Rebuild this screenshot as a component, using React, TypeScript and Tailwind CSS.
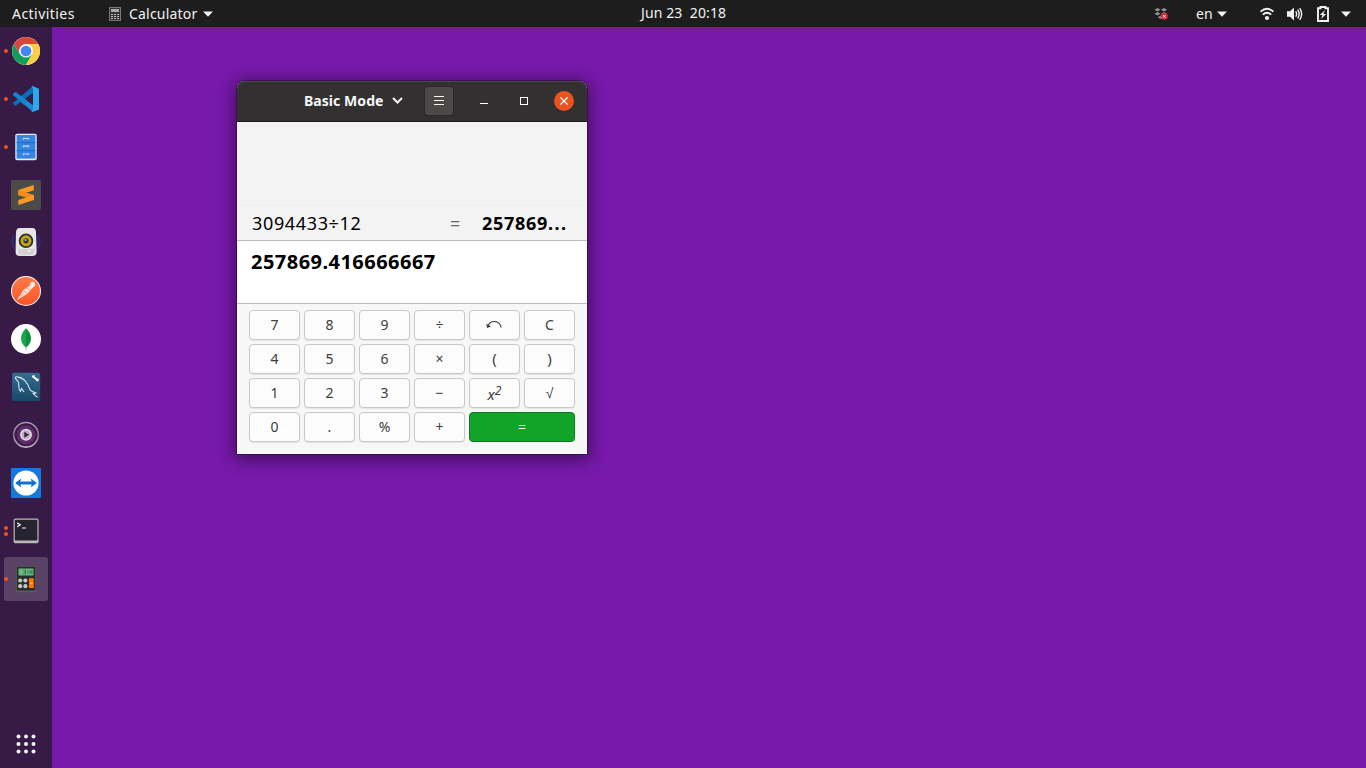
import React from "react";

type IconProps = { children: React.ReactNode };

const AppIcon = ({ children }: IconProps) => (
  <svg viewBox="0 0 32 32" className="h-8 w-8 shrink-0">
    {children}
  </svg>
);

const Chrome = () => (
  <AppIcon>
    <circle cx="16" cy="16" r="14" fill="#fff" />
    <path d="M3.9 9A14 14 0 0 0 16 30L22 19.5L16 16L10 19.5Z" fill="#0f9d58" />
    <path d="M28.1 9A14 14 0 0 1 16 30L22 19.5A7 7 0 0 0 16 9Z" fill="#ffcd40" />
    <path d="M3.9 9L10 19.5A7 7 0 0 1 16 9H28.1A14 14 0 0 0 3.9 9Z" fill="#db4437" />
    <circle cx="16" cy="16" r="6.6" fill="#f1f1f1" />
    <circle cx="16" cy="16" r="5.3" fill="#4285f4" />
  </AppIcon>
);

const Code = () => (
  <AppIcon>
    <path d="M3 11L5.5 9L23 22.3V29L3.4 12.3Z" fill="#1f8ad2" />
    <path d="M3 20.6L5.5 23L23 9.7V3L3.4 19.5Z" fill="#0a6fb8" />
    <path d="M3 11L5.5 9L17 17.7L14 22Z" fill="#1684cf" />
    <path d="M22.5 3L29 5.7V26.4L22.5 29L21.3 28.3L23 27V5L21.3 3.8Z" fill="#2fa8ee" />
  </AppIcon>
);

const Files = () => (
  <AppIcon>
    <rect x="5.3" y="2.8" width="21.4" height="26.5" rx="1.8" fill="#e8eef6" />
    <rect x="6.6" y="4" width="18.8" height="23.6" fill="#3584e4" />
    <path d="M6.6 11.7H25.4M6.6 19.7H25.4" stroke="#1d63b8" strokeWidth=".8" />
    <path d="M13.4 8.5V7.5H18.6V8.5M13.4 16.2V15.2H18.6V16.2M13.4 24V23H18.6V24" fill="none" stroke="#d9e2ec" strokeWidth="1.2" />
  </AppIcon>
);

const Sublime = () => (
  <AppIcon>
    <rect x="1" y="1" width="30" height="30" rx="1.5" fill="#4b4b4b" />
    <path d="M8.4 11L23.8 6V11.2L8.4 16.2Z" fill="#ff9820" />
    <path d="M8.4 11L23.8 16V21L8.4 16.2Z" fill="#f08c1d" />
    <path d="M8.4 21L23.8 16V21L8.4 26Z" fill="#ff9820" />
  </AppIcon>
);

const Speaker = () => (
  <AppIcon>
    <ellipse cx="16" cy="15" rx="14.7" ry="11" fill="#30205a" />
    <path d="M4 8Q0 15 4 22M28 8Q32 15 28 22" fill="none" stroke="#3c3472" />
    <path d="M9.5 1H22.5Q25.6 1 26 5L26.6 25Q26.6 29 22.5 29H9.5Q5.6 29 5.6 25L6 5Q6.4 1 9.5 1Z" fill="#e6e6e6" />
    <path d="M8 22H24V25.5Q24 28 21.5 28H10.5Q8 28 8 25.5Z" fill="#d2d2d2" />
    <circle cx="16" cy="13.8" r="7.3" fill="#2e2e2b" />
    <circle cx="16" cy="13.8" r="5.5" fill="#c3a51d" />
    <circle cx="16" cy="13.8" r="2.6" fill="#39372d" />
    <circle cx="15.5" cy="13" r="1" fill="#bbb" />
    <circle cx="19" cy="24" r="1.6" fill="#f7f7f7" stroke="#bbb" strokeWidth=".5" />
  </AppIcon>
);

const Postman = () => (
  <AppIcon>
    <defs>
      <linearGradient id="flame" x2="0" y2="1"><stop stopColor="#ff7a45" /><stop offset="1" stopColor="#fa5528" /></linearGradient>
    </defs>
    <circle cx="16" cy="16" r="15" fill="#fff" />
    <circle cx="16" cy="16" r="14" fill="url(#flame)" />
    <path d="M20.6 10L13 15.2L10.6 19.4L6.6 25.4L14.2 20.8L17.6 18.6L23.2 12.2Z" fill="#ffe4da" />
    <circle cx="22.6" cy="9.4" r="2.6" fill="#ffe9e0" />
    <path d="M13.5 16L17 18M17 13.2L20 15.2M10.2 21.6L13.4 19" stroke="#ff7144" strokeWidth=".7" />
  </AppIcon>
);

const Mongo = () => (
  <AppIcon>
    <circle cx="16" cy="16" r="15" fill="#fff" />
    <path d="M16 5.2C12.6 8.5 11 12 11 15.5C11 19.7 13.4 22.6 16 24.6Z" fill="#17a94e" />
    <path d="M16 5.2C19.4 8.5 21 12 21 15.5C21 19.7 18.6 22.6 16 24.6Z" fill="#118d42" />
    <path d="M16 23.5V27" stroke="#9fb8a6" />
  </AppIcon>
);

const MySql = () => (
  <AppIcon>
    <defs>
      <linearGradient id="sea" x2="0" y2="1"><stop stopColor="#336d91" /><stop offset="1" stopColor="#194869" /></linearGradient>
    </defs>
    <rect x="2" y="1.8" width="28.2" height="28.2" rx="2" fill="url(#sea)" />
    <path d="M5.3 7.2C5.2 5.8 6.6 5.3 8 6.1C13 6.3 18 12 19.7 18.2C20.5 20 22.5 20.8 25.8 22L23.2 22.6L27.6 26.4M5.3 7.2L8.2 10.8C9.6 13 7.6 17 10.4 20.5L11.6 17.4L14 21" fill="none" stroke="#dce7ef" strokeWidth="1.1" />
    <path d="M23.6 6L27 8.8" stroke="#fff" strokeWidth="2" />
    <path d="M21.7 4.7L24.5 4L24.7 7L22.3 6.6ZM26 8L28.4 7.5L28.8 9L27.8 10.6L26.3 10Z" fill="#fff" />
  </AppIcon>
);

const Player = () => (
  <AppIcon>
    <defs>
      <linearGradient id="ring" x2="0" y2="1"><stop stopColor="#a79fac" /><stop offset=".5" stopColor="#80708a" /><stop offset="1" stopColor="#c4bdc6" /></linearGradient>
    </defs>
    <circle cx="16" cy="15.8" r="12.3" fill="#5a2864" stroke="url(#ring)" strokeWidth="1.6" />
    <circle cx="16" cy="15.8" r="10.4" fill="#5f2c69" stroke="#3a1b45" strokeWidth="1.6" />
    <circle cx="16" cy="15.8" r="6" fill="#ddd8de" />
    <circle cx="16" cy="15.8" r="4.2" fill="#b9aebc" />
    <path d="M14.2 12.8L19.2 15.8L14.2 18.8Z" fill="#4c204f" />
  </AppIcon>
);

const TeamViewer = () => (
  <AppIcon>
    <rect x="1" y="1" width="30" height="30" rx="1" fill="#1479dc" />
    <circle cx="16" cy="16" r="12.6" fill="#fff" />
    <path d="M5.1 16L11.2 11.6L10.4 14.6H21.6L20.8 11.6L26.9 16L20.8 20.4L21.6 17.4H10.4L11.2 20.4Z" fill="#0d72ce" />
  </AppIcon>
);

const Terminal = () => (
  <AppIcon>
    <rect x="3.6" y="3.6" width="25" height="24.6" rx="1.6" fill="#b9b8b5" />
    <rect x="4.8" y="4.8" width="22.6" height="20.6" rx=".6" fill="#252430" />
    <path d="M7.2 8L10.2 9.8L7.2 11.7M12 13H15.8" fill="none" stroke="#fff" strokeWidth="1.2" />
  </AppIcon>
);

const CalculatorApp = () => (
  <AppIcon>
    <rect x="6.1" y="3.2" width="19.8" height="26" rx="1.5" fill="#5f5d59" />
    <rect x="6.9" y="3.7" width="18.2" height="23.7" rx=".8" fill="#282c2b" />
    <rect x="8.5" y="5.4" width="15" height="7" rx=".7" fill="#69ba80" />
    <path d="M13 7H15.5V10.8H13M13.6 8.9H15.5M18 10.8V7.5M20 10.8V7.2L22 10.8V7" fill="none" stroke="#397650" strokeWidth=".9" />
    <circle cx="10.2" cy="17.5" r="2.1" fill="#c9c8c4" />
    <circle cx="15.4" cy="17.5" r="2.1" fill="#c9c8c4" />
    <circle cx="10.2" cy="23.2" r="2.1" fill="#c9c8c4" />
    <circle cx="15.4" cy="23.2" r="2.1" fill="#c9c8c4" />
    <rect x="19" y="15.3" width="4.8" height="9.8" rx=".5" fill="#ff7800" />
    <path d="M20.2 20.2H22.6" stroke="#ffd0a0" strokeWidth=".9" />
  </AppIcon>
);

const dockItems = [
  { Icon: Chrome, dots: 1 },
  { Icon: Code, dots: 1 },
  { Icon: Files, dots: 1 },
  { Icon: Sublime, dots: 0 },
  { Icon: Speaker, dots: 0 },
  { Icon: Postman, dots: 0 },
  { Icon: Mongo, dots: 0 },
  { Icon: MySql, dots: 0 },
  { Icon: Player, dots: 0 },
  { Icon: TeamViewer, dots: 0 },
  { Icon: Terminal, dots: 2 },
  { Icon: CalculatorApp, dots: 1, active: true },
];

const Caret = () => (
  <svg className="h-[6px] w-[10px] shrink-0" viewBox="0 0 10 6"><path d="M0 .5H10L5 5.7Z" fill="#f2f2f2" /></svg>
);

const TopBar = () => (
  <header className="flex h-[27px] shrink-0 items-center bg-[#1d1d1d] text-sm leading-[27px] text-[#f2f2f2]">
    <div className="flex w-[641px] items-center pl-3">
      <span className="w-[97px] tracking-[0.45px]">Activities</span>
      <svg className="mr-2 h-[14px] w-3" viewBox="0 0 12 14">
        <rect x=".5" y=".5" width="11" height="13" fill="#343434" stroke="#777" />
        <rect x="2" y="2" width="8" height="3" fill="#aaa" />
        <path d="M2 7.5H10M2 9.5H10M2 11.5H10" stroke="#bbb" strokeWidth="1.2" strokeDasharray="2 1" />
      </svg>
      <span className="w-[74px] tracking-[0.2px]">Calculator</span>
      <Caret />
    </div>
    <div className="w-[512px] pb-[2px] leading-[25px] whitespace-pre tracking-[0.1px]">Jun 23  20:18</div>
    <svg className="h-[14px] w-4 shrink-0" viewBox="0 0 16 14">
      <path d="M1.5 2.8L4.5 1L7.5 2.8L4.5 4.6ZM8 2.8L11 1L14 2.8L11 4.6ZM1.5 6.8L4.5 5L7.5 6.8L4.5 8.6ZM8 6.8L11 5L14 6.8L11 8.6ZM4.7 10.3L7.7 8.5L10.7 10.3L7.7 12.1Z" fill="#949494" />
      <circle cx="11.3" cy="9.3" r="3.5" fill="#e52434" />
      <path d="M10 8L12.6 10.6M12.6 8L10 10.6" stroke="#fff" />
    </svg>
    <span className="ml-[27px] w-[21px]">en</span>
    <Caret />
    <svg className="ml-[33px] h-[14px] w-[14px]" viewBox="0 0 14 14">
      <path d="M.5 4.7Q7-1.1 13.5 4.7M2.8 7.6Q7 4 11.2 7.6" fill="none" stroke="#f2f2f2" strokeWidth="1.8" />
      <circle cx="7" cy="11" r="2.1" fill="#f2f2f2" />
    </svg>
    <svg className="ml-[13px] h-4 w-4" viewBox="0 0 16 16">
      <path d="M0 5.3H3L7 1.6V14.4L3 10.7H0Z" fill="#f2f2f2" />
      <path d="M8.7 5.3Q10.6 8 8.7 10.7M10.7 3.7Q13.6 8 10.7 12.3M12.7 2.2Q16.6 8 12.7 13.8" fill="none" stroke="#f2f2f2" strokeWidth="1.4" />
    </svg>
    <svg className="ml-[14px] h-4 w-3" viewBox="0 0 12 16">
      <path d="M1 2.3H3.5V1H8.5V2.3H11V15H1Z" fill="none" stroke="#f2f2f2" strokeWidth="1.9" />
      <path d="M8 4L2.8 9H5.5L4 13L9.2 8H6.4Z" fill="#f2f2f2" />
    </svg>
    <div className="ml-3 flex"><Caret /></div>
  </header>
);

const Dock = () => (
  <nav className="flex w-[52px] shrink-0 flex-col bg-[#371a45]">
    {dockItems.map(({ Icon, dots, active }, i) => (
      <div key={i} className="flex h-12 items-center">
        <div className={active ? "ml-1 flex h-11 w-11 items-center rounded-[3px] bg-[#5a4267]" : "ml-1 flex h-11 w-11 items-center"}>
          <div className="flex w-[6px] shrink-0 flex-col gap-[2px]">
            {Array.from({ length: dots }, (_, n) => <span key={n} className="h-1 w-1 rounded-full bg-[#e95420]" />)}
          </div>
          <Icon />
        </div>
      </div>
    ))}
    <svg className="mt-auto mb-[14px] ml-4 h-5 w-5" viewBox="0 0 20 20" fill="#f2f2f2">
      {[2.5, 10, 17.5].map((y) => [2.5, 10, 17.5].map((x) => <circle key={`${x}-${y}`} cx={x} cy={y} r="2" />))}
    </svg>
  </nav>
);

const UndoIcon = () => (
  <svg className="mr-[2px] h-[10px] w-4" viewBox="0 0 16 10">
    <path d="M2 6.2C4.2-.2 13.4-.2 15.2 7.5" fill="none" stroke="#3d3d3d" strokeWidth="1.1" />
    <path d="M.4 3.8L1 8L5 6.6Z" fill="#3d3d3d" />
  </svg>
);

const keys: React.ReactNode[] = [
  "7", "8", "9", "÷", <UndoIcon />, "C",
  "4", "5", "6", "×", <span className="text-[15px]">(</span>, <span className="text-[15px]">)</span>,
  "1", "2", "3", "−",
  <span className="flex items-baseline pt-[3px] italic"><span className="text-[15px]">x</span><span className="-translate-y-[5px] text-[12px]">2</span></span>,
  "√", "0", ".", "%", "+",
];

const Calculator = () => (
  <main className="mt-[54px] ml-[185px] flex h-[373px] w-[350px] flex-col overflow-hidden rounded-t-[8px] bg-[#f7f7f7] shadow-[0_0_0_1px_rgba(0,0,0,0.3),0_3px_16px_3px_rgba(0,0,0,0.45)]">
    <div className="flex h-[41px] shrink-0 items-center border-t border-b border-t-[#4a4848] border-b-[#1c1b1b] bg-[#323030] pb-[2px] text-white">
      <span className="ml-[67px] w-[88px] text-sm font-bold tracking-[0.05px] whitespace-nowrap text-[#f7f7f7]">Basic Mode</span>
      <svg className="h-[7px] w-[11px]" viewBox="0 0 11 7"><path d="M1 1L5.5 5.5L10 1" fill="none" stroke="#f7f7f7" strokeWidth="2" /></svg>
      <button className="ml-[22px] flex h-7 w-7 items-center justify-center rounded-[3px] bg-[#4a4947] shadow-[0_0_0_1px_#2a2929]">
        <svg className="h-[10px] w-[10px]" viewBox="0 0 10 10"><path d="M0 .5H10M0 4.5H10M0 8.5H10" stroke="#f7f7f7" shapeRendering="crispEdges" /></svg>
      </button>
      <span className="mt-[5px] ml-[27px] h-px w-2 bg-white" />
      <span className="ml-8 h-2 w-2 border border-white" />
      <button className="ml-[26px] flex h-5 w-5 items-center justify-center rounded-full bg-[#e95420]">
        <svg className="h-2 w-2" viewBox="0 0 8 8"><path d="M.4.4L7.6 7.6M7.6.4L.4 7.6" stroke="#fff" strokeWidth="1.3" /></svg>
      </button>
    </div>
    <div className="flex h-[119px] shrink-0 flex-col justify-end border-b border-[#bdbdbd] bg-[#f3f3f3] text-[18px] text-black">
      <div className="flex h-[35px] items-center border-t border-[#efefef] pl-[15px]">
        <span className="w-[198px] tracking-[0.65px]">3094433÷12</span>
        <span className="w-[32px] text-[#666]">=</span>
        <span className="font-bold tracking-[0.7px]">257869<span className="tracking-[1.5px]">...</span></span>
      </div>
    </div>
    <div className="h-[63px] shrink-0 border-b border-[#bdbdbd] bg-white pt-[7px] pl-[14px] text-[20px] leading-[28px] font-bold tracking-[0.47px] text-black">257869.416666667</div>
    <div className="grid grid-cols-6 gap-1 px-3 pt-[6px] text-sm text-[#3d3d3d]">
      {keys.map((key, i) => (
        <button key={i} className="flex h-[30px] items-center justify-center rounded-[4px] border border-[#c8c8c8] bg-[#fcfcfc] shadow-[0_1px_1px_rgba(0,0,0,0.08)]">{key}</button>
      ))}
      <button className="col-span-2 flex h-[30px] items-center justify-center rounded-[4px] border border-[#0e7a1d] bg-[#12a428] text-white">=</button>
    </div>
  </main>
);

export default function App() {
  return (
    <div className="flex h-[768px] w-[1366px] flex-col overflow-hidden bg-[#7719aa] font-['Noto_Sans',sans-serif]">
      <TopBar />
      <div className="flex flex-1 items-start">
        <div className="flex h-[741px]"><Dock /></div>
        <Calculator />
      </div>
    </div>
  );
}
